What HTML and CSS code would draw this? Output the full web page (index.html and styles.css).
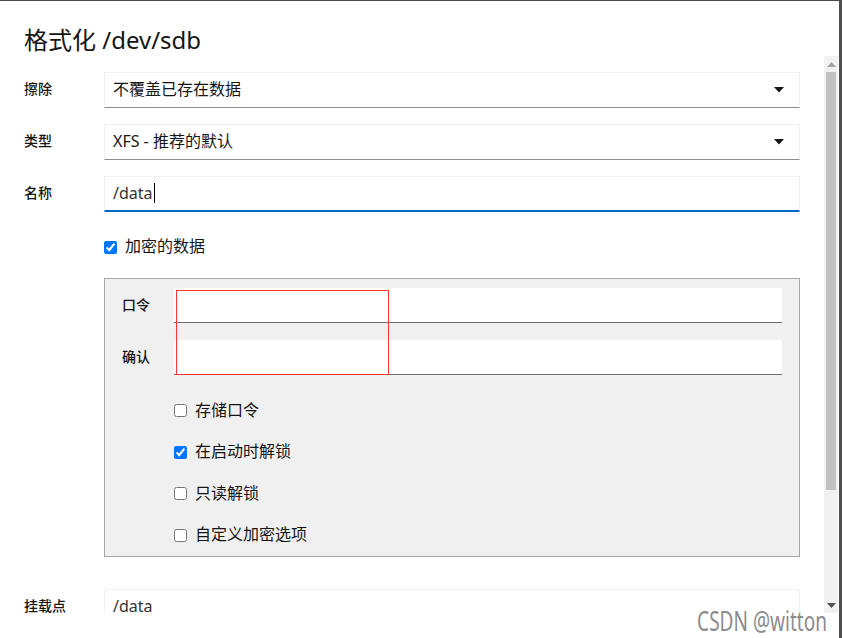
FILE: index.html
```html
<!DOCTYPE html>
<html lang="zh-CN">
<head>
<meta charset="utf-8">
<title>格式化 /dev/sdb</title>
<link rel="stylesheet" href="styles.css">
</head>
<body>
<div class="window">
  <h1 class="title">格式化 /dev/sdb</h1>
  <div class="body-wrap">
    <div class="body">
      <div class="row">
        <label class="label">擦除</label>
        <div class="select"><span>不覆盖已存在数据</span><svg class="caret" width="10" height="6" viewBox="0 0 10 6"><polygon points="0,0 10,0 5,5.5" fill="#151515"/></svg></div>
      </div>
      <div class="row">
        <label class="label">类型</label>
        <div class="select"><span>XFS - 推荐的默认</span><svg class="caret" width="10" height="6" viewBox="0 0 10 6"><polygon points="0,0 10,0 5,5.5" fill="#151515"/></svg></div>
      </div>
      <div class="row">
        <label class="label">名称</label>
        <div class="text-input focused"><span>/data</span><span class="cursor"></span></div>
      </div>
      <div class="check-row outer">
        <input type="checkbox" checked><span>加密的数据</span>
      </div>
      <div class="crypto-box">
        <div class="inner-row">
          <label class="label">口令</label>
          <div class="pw-input"></div>
        </div>
        <div class="inner-row second">
          <label class="label">确认</label>
          <div class="pw-input"></div>
        </div>
        <div class="checks">
          <div class="check-row"><input type="checkbox"><span>存储口令</span></div>
          <div class="check-row"><input type="checkbox" checked><span>在启动时解锁</span></div>
          <div class="check-row"><input type="checkbox"><span>只读解锁</span></div>
          <div class="check-row"><input type="checkbox"><span>自定义加密选项</span></div>
        </div>
        <div class="annotation"></div>
      </div>
      <div class="row mount">
        <label class="label">挂载点</label>
        <div class="text-input plain"><span>/data</span></div>
      </div>
    </div>
    <div class="scrollbar">
      <div class="sb-btn"><svg width="9" height="5" viewBox="0 0 9 5"><polygon points="0,5 9,5 4.5,0" fill="#a3a3a3"/></svg></div>
      <div class="sb-track"><div class="sb-thumb"></div></div>
      <div class="sb-btn"><svg width="9" height="5" viewBox="0 0 9 5"><polygon points="0,0 9,0 4.5,5" fill="#505050"/></svg></div>
    </div>
  </div>
  <div class="watermark">CSDN @witton</div>
</div>
</body>
</html>
```
FILE: styles.css
```css
* { box-sizing: border-box; }
html, body { margin: 0; padding: 0; background: #fff; }
body {
  font-family: "Noto Sans", "Noto Sans CJK SC", sans-serif;
  color: #151515;
}
.window {
  position: relative;
  width: 842px;
  height: 638px;
  border-top: 1px solid #4a4a4a;
  border-right: 3px solid #4f4f4f;
  overflow: hidden;
  background: #fff;
}
.title {
  margin: 0;
  height: 55px;
  padding: 23px 0 0 24px;
  font-size: 24px;
  line-height: 32px;
  font-weight: 400;
  color: #151515;
}
.body-wrap {
  display: flex;
  height: 557px;
}
.body {
  flex: 1;
  overflow: hidden;
  padding: 16px 24px 0 24px;
}
.row {
  display: grid;
  grid-template-columns: 80px 1fr;
  align-items: center;
  margin-bottom: 16px;
}
.label {
  font-size: 14px;
  font-weight: 500;
  line-height: 18px;
  margin-top: -2px;
  color: #151515;
}
.select, .text-input {
  height: 36px;
  border: 1px solid #f0f0f0;
  border-bottom-color: #8a8d90;
  padding: 0 15px 0 8px;
  display: flex;
  align-items: center;
  justify-content: space-between;
  font-size: 16px;
  line-height: 20px;
  color: #151515;
}
.select span, .text-input span { margin-top: -2px; }
.text-input { justify-content: flex-start; }
.text-input.focused {
  border-bottom: 2px solid #0066cc;
  color: #333;
}
.text-input.plain { color: #333; border-radius: 3px 3px 0 0; }
.text-input .cursor {
  display: inline-block;
  width: 1px;
  height: 20px;
  background: #000;
  margin-left: 1px;
}
.caret { display: block; }
.check-row {
  display: flex;
  align-items: center;
  font-size: 16px;
  line-height: 20px;
  color: #151515;
}
.check-row span { margin-top: -2px; }
.check-row input {
  width: 13px;
  height: 13px;
  margin: 0 8px 0 0;
}
.check-row.outer {
  height: 38px;
  margin: 0 0 12px 80px;
}
.crypto-box {
  position: relative;
  margin-left: 80px;
  background: #f0f0f0;
  border: 1px solid #a6a6a6;
  padding: 9px 17px 0 17px;
}
.inner-row {
  display: grid;
  grid-template-columns: 52px 1fr;
  align-items: center;
}
.inner-row.second { margin-top: 17px; }
.pw-input {
  height: 35px;
  background: #fff;
  border-bottom: 1px solid #6a6e73;
}
.checks {
  margin-top: 15px;
  padding-left: 52px;
  display: flex;
  flex-direction: column;
}
.checks .check-row { height: 41.5px; }
.annotation {
  position: absolute;
  left: 71px;
  top: 11px;
  width: 213px;
  height: 85px;
  border: 1px solid #ff3333;
}
.row.mount { margin-top: 32px; }
.scrollbar {
  width: 14px;
  margin-right: 1px;
  background: #f1f1f1;
  display: flex;
  flex-direction: column;
}
.sb-btn {
  height: 16px;
  display: flex;
  align-items: center;
  justify-content: center;
}
.sb-track {
  flex: 1;
  padding: 0 2px;
}
.sb-thumb {
  height: 418px;
  background: #c1c1c1;
}
.watermark {
  position: absolute;
  right: 12px;
  bottom: 0;
  font-family: "Noto Sans", sans-serif;
  font-size: 28px;
  line-height: 36px;
  color: #8c8c8c;
  transform: scaleX(0.68);
  transform-origin: right center;
  white-space: nowrap;
}
```
